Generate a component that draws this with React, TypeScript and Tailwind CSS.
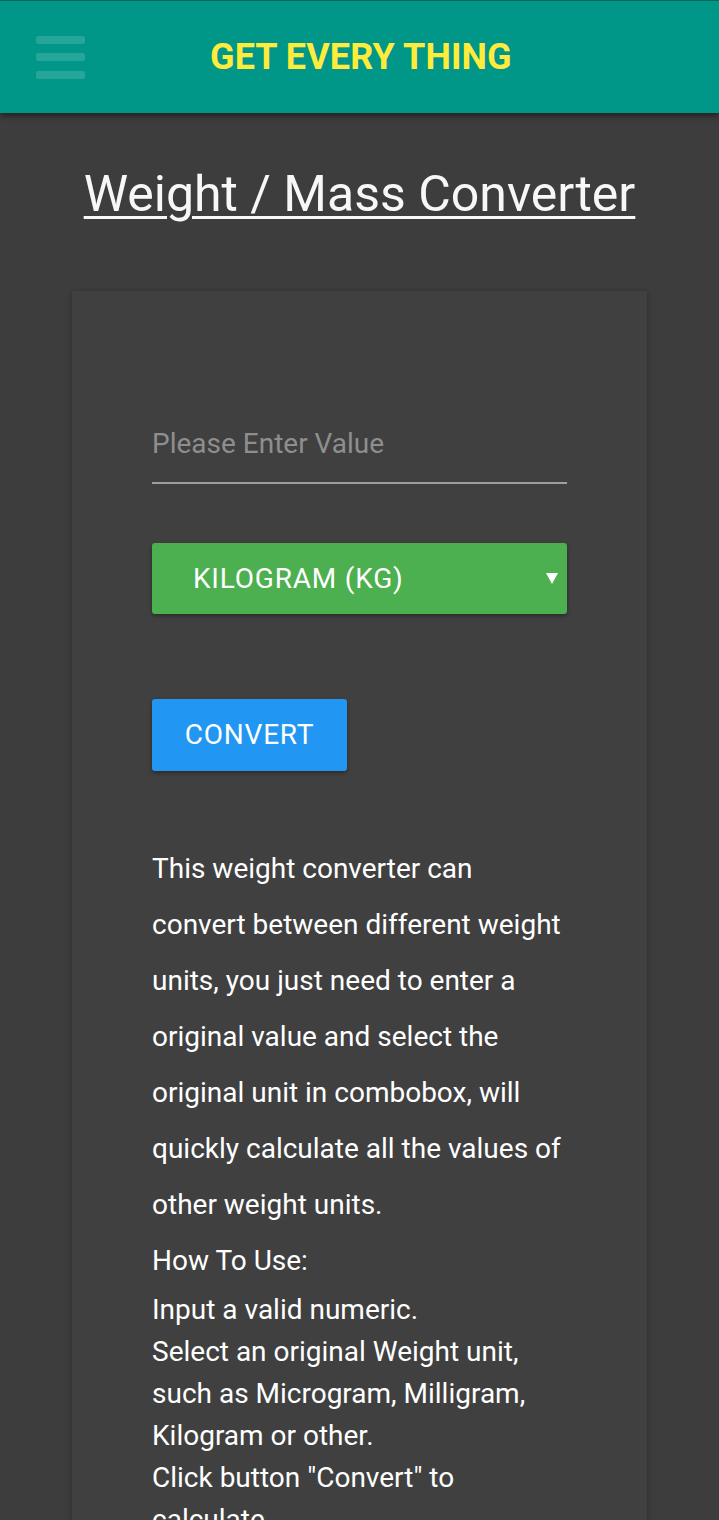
const helpLines = [
  "Input a valid numeric.",
  "Select an original Weight unit, such as Microgram, Milligram, Kilogram or other.",
  'Click button "Convert" to calculate.',
];

const Header = () => {
  return (
    <div className="relative z-10 flex h-[113px] items-center border-t border-[#00695c] bg-[#009688] shadow-[0_3px_6px_rgba(0,0,0,0.45)]">
      {/* menu icon */}
      <button className="ml-[36px] flex w-[49px] flex-col gap-[9.5px]">
        <span className="block h-[8px] w-full rounded-[2px] bg-white/15" />
        <span className="block h-[8px] w-full rounded-[2px] bg-white/15" />
        <span className="block h-[8px] w-full rounded-[2px] bg-white/15" />
      </button>
      <h1 className="ml-[125px] text-[36px] font-bold tracking-[0.1px] text-[#ffeb3b]">
        GET EVERY THING
      </h1>
    </div>
  );
};

const App = () => {
  return (
    <div className="min-h-screen bg-[#3d3d3d] font-['Roboto',_sans-serif] text-white">
      <Header />

      <h2 className="mt-[51px] mb-[67px] text-center text-[50px] leading-[60px] text-[#f7f7f7] underline decoration-[3px] underline-offset-[5px]">
        Weight / Mass Converter
      </h2>

      <div className="mx-[72px] bg-[#404040] px-[80px] pt-[121px] pb-[80px] shadow-[0_1px_5px_rgba(0,0,0,0.3)]">
        <input
          type="text"
          placeholder="Please Enter Value"
          className="h-[72px] w-full border-b-2 border-[#9e9e9e] bg-transparent pb-[7px] text-[28px] text-white outline-none placeholder:text-[#8e8e8e]"
        />

        <div className="mt-[59px] flex h-[71px] items-center justify-between rounded-[3px] bg-[#4caf50] pl-[41px] pr-[9px] shadow-[0_2px_4px_rgba(0,0,0,0.35)]">
          <span className="text-[28px] tracking-[0.8px]">KILOGRAM (KG)</span>
          <svg width="12" height="11" viewBox="0 0 12 11">
            <polygon points="0,0 12,0 6,11" fill="#ffffff" />
          </svg>
        </div>

        <button className="mt-[85px] h-[72px] w-[195px] rounded-[3px] bg-[#2196f3] text-[28px] tracking-[0.8px] text-white shadow-[0_2px_4px_rgba(0,0,0,0.35)]">
          CONVERT
        </button>

        <p className="mt-[70px] text-[28px] leading-[56px]">
          This weight converter can convert between different weight units, you just need to enter a
          original value and select the original unit in combobox, will quickly calculate all the
          values of other weight units.
        </p>

        <p className="mt-[7px] text-[28px] leading-[42px]">How To Use:</p>
        <div className="mt-[7px] text-[28px] leading-[42px]">
          {helpLines.map((line) => (
            <div key={line}>{line}</div>
          ))}
        </div>
      </div>
    </div>
  );
};

export default App;
